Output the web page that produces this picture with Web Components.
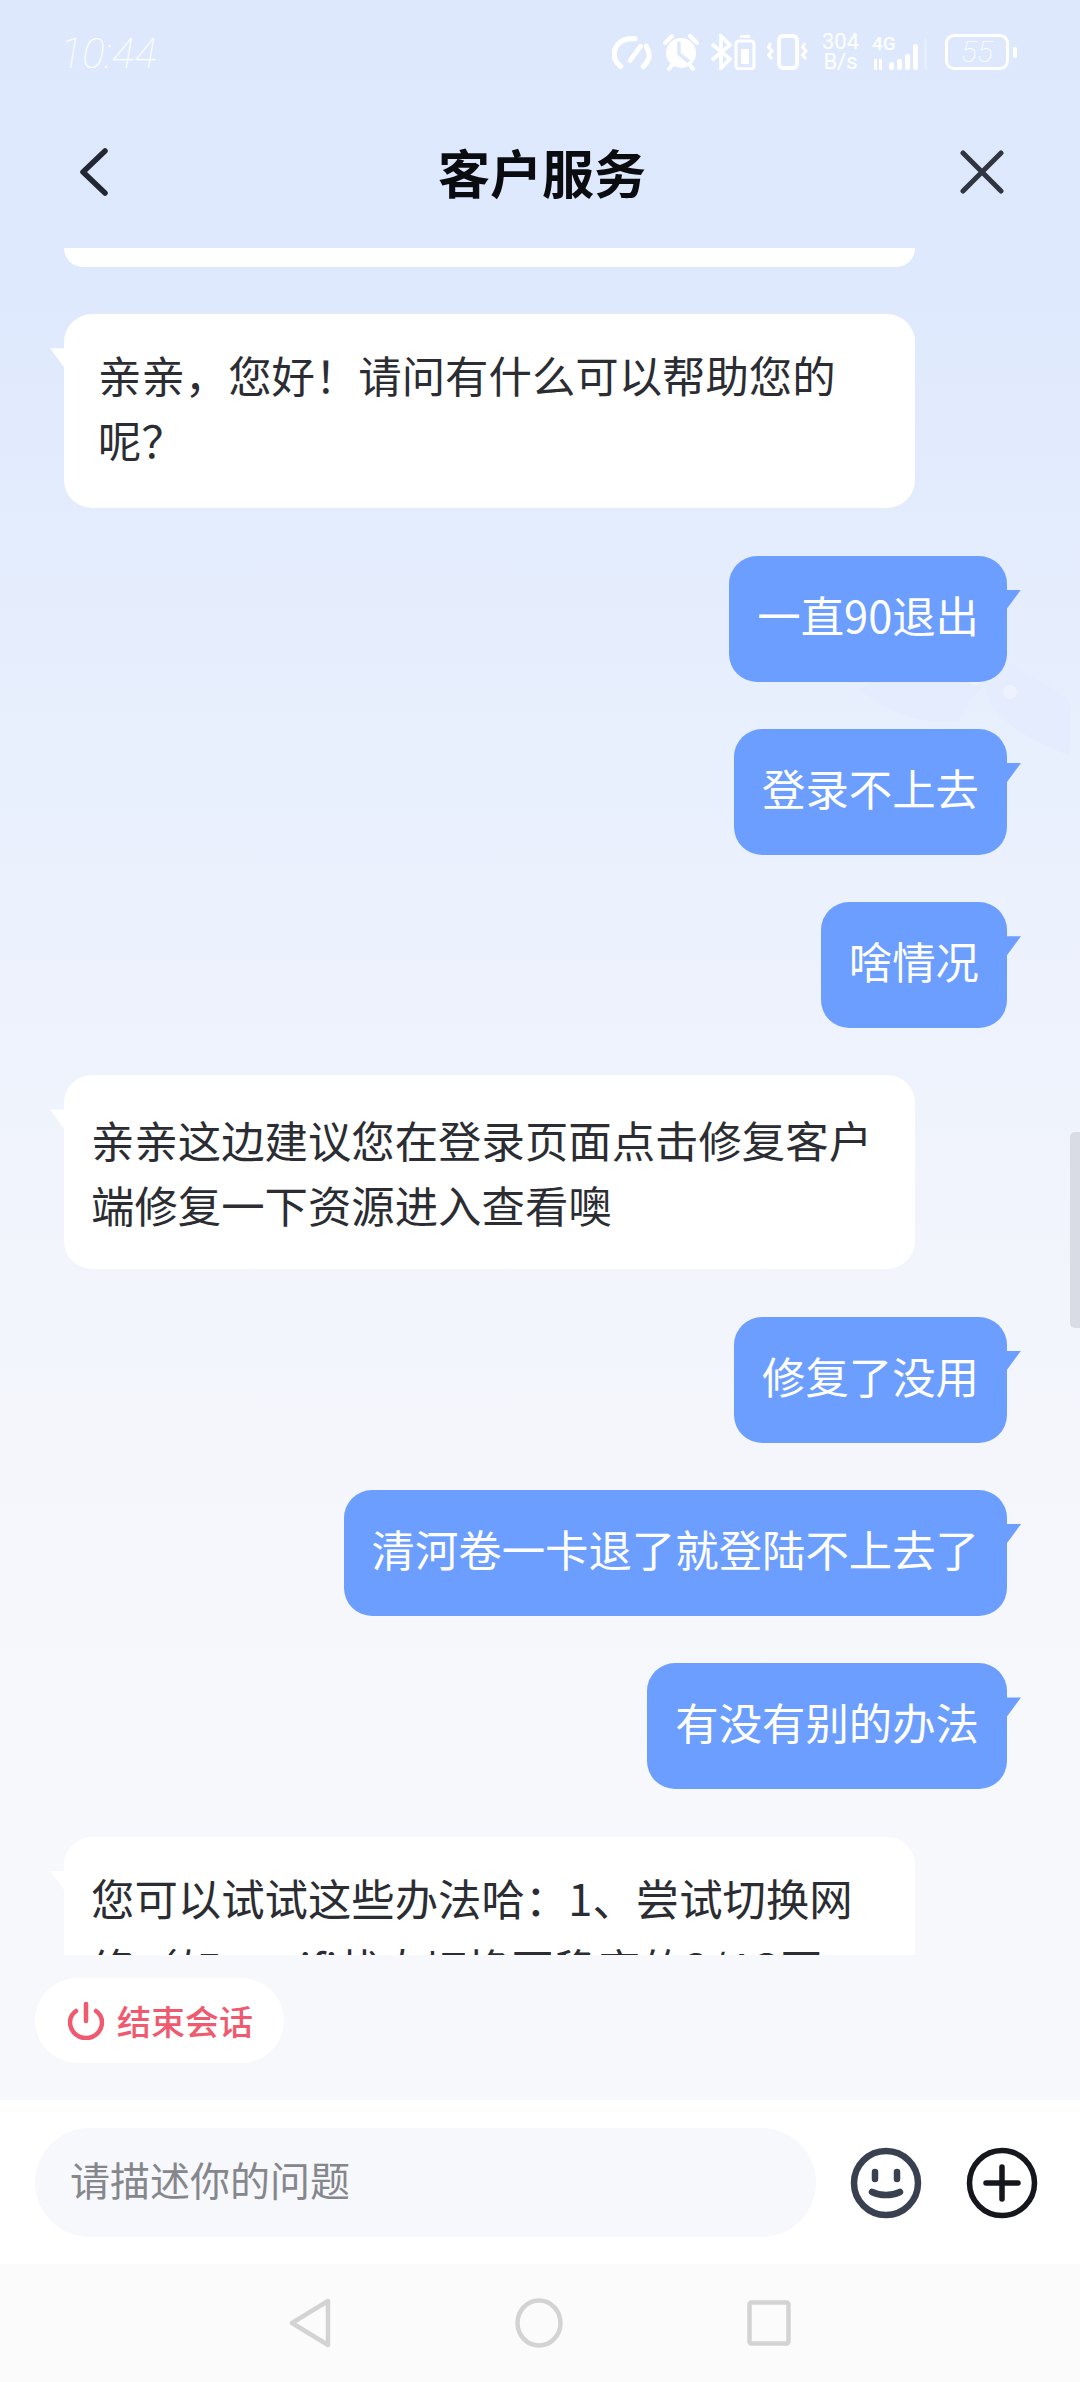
<!DOCTYPE html>
<html lang="zh">
<head>
<meta charset="utf-8">
<title>客户服务</title>
<style>
  html, body { margin: 0; padding: 0; }
  body { font-family: "Noto Sans CJK SC", "Noto Sans", sans-serif; background: #f7f8fb; }
</style>
</head>
<body>
<support-page>
  <status-strip slot="status"></status-strip>
  <title-row slot="title">客户服务</title-row>
  <chat-bubble side="left" stub></chat-bubble>
  <chat-bubble side="left" style="--inset:34px;--top:28px">亲亲，您好！请问有什么可以帮助您的呢？</chat-bubble>
  <chat-bubble side="right">一直90退出</chat-bubble>
  <chat-bubble side="right">登录不上去</chat-bubble>
  <chat-bubble side="right">啥情况</chat-bubble>
  <chat-bubble side="left" style="--top:32px">亲亲这边建议您在登录页面点击修复客户端修复一下资源进入查看噢</chat-bubble>
  <chat-bubble side="right">修复了没用</chat-bubble>
  <chat-bubble side="right">清河卷一卡退了就登陆不上去了</chat-bubble>
  <chat-bubble side="right">有没有别的办法</chat-bubble>
  <chat-bubble side="left" style="--top:25px;line-height:70px">您可以试试这些办法哈：1、尝试切换网络（如：wifi状态切换至稳定的3/4G网</chat-bubble>
  <end-chip slot="chip">结束会话</end-chip>
  <composer-bar slot="composer">请描述你的问题</composer-bar>
  <nav-keys slot="nav"></nav-keys>
</support-page>

<script>
class SupportPage extends HTMLElement {
  constructor() {
    super();
    this.root = this.attachShadow({ mode: "open" });
    this.root.innerHTML = `
      <style>
        :host {
          display: flex;
          flex-direction: column;
          position: relative;
          width: 1080px;
          height: 2382px;
          overflow: hidden;
          background: linear-gradient(180deg, #dde8fd 0, #dfe9fd 300px, #e9f0fd 800px, #f1f4fc 1200px, #f7f8fb 1750px, #f7f8fb 100%);
        }
        .deco { position: absolute; left: 860px; top: 640px; }
        .thumb {
          position: absolute;
          right: 0;
          top: 1132px;
          width: 10px;
          height: 196px;
          border-radius: 5px 0 0 5px;
          background: #d9dce4;
        }
        .list {
          flex: 1;
          min-height: 0;
          overflow: hidden;
          display: flex;
          flex-direction: column;
          gap: 47.3px;
          padding: 0 73px 0 64px;
          position: relative;
        }
      </style>
      <svg class="deco" width="220" height="220" viewBox="0 0 220 220" fill="none">
        <path d="M0 50C30 76 70 86 100 80C106 62 116 52 128 44C122 68 150 92 210 116V60L130 10L40 20Z" fill="#e4ecfd"/>
        <circle cx="115" cy="36" r="9" fill="#edf2fe"/>
        <circle cx="150" cy="52" r="7" fill="#edf2fe"/>
      </svg>
      <slot name="status"></slot>
      <slot name="title"></slot>
      <div class="list"><slot></slot></div>
      <slot name="chip"></slot>
      <slot name="composer"></slot>
      <slot name="nav"></slot>
      <div class="thumb"></div>
    `;
  }
}

class StatusStrip extends HTMLElement {
  constructor() {
    super();
    this.root = this.attachShadow({ mode: "open" });
    this.root.innerHTML = `
      <style>
        :host {
          display: flex;
          align-items: center;
          justify-content: space-between;
          height: 100px;
          padding: 4px 63px 0 60px;
          box-sizing: border-box;
          color: #fff;
          font-family: Roboto, "Noto Sans", sans-serif;
        }
        .time { font-size: 42px; font-weight: 100; font-style: italic; line-height: 1; margin-top: 3px; }
        .icons { display: flex; align-items: center; }
        svg { display: block; flex: none; }
        .speed { line-height: 20px; font-size: 22px; text-align: center; margin: 0 13px; }
        .net { display: flex; flex-direction: column; width: 60px; font-size: 19px; line-height: 20px; font-weight: 500; }
        .net svg { overflow: visible; }
        .batt {
          box-sizing: border-box;
          width: 64px; height: 36px;
          border: 3px solid #fff;
          border-radius: 9px;
          font-size: 30px; font-weight: 100; font-style: italic;
          line-height: 29px;
          text-align: center;
          margin-left: 13px;
        }
        .tip { width: 4px; height: 11px; border-radius: 2px; background: #fff; margin-left: 4px; }
      </style>
      <span class="time">10:44</span>
      <div class="icons">
        <svg width="40" height="36" viewBox="0 0 42 36" fill="none" stroke="#fff" stroke-linecap="round" stroke-linejoin="round">
          <path d="M9 33C3 28 1 22 3 16C5 8 13 3 24 4" stroke-width="5.5"/>
          <path d="M36 12C39 17 40 22 38 26C37 29 35 31 33 33" stroke-width="5.5"/>
          <path d="M19 27L30 12" stroke-width="5"/>
        </svg>
        <svg width="38" height="38" viewBox="0 0 38 38" fill="none" stroke="#fff" stroke-linecap="round" style="margin-left:10px">
          <circle cx="19" cy="20" r="15" fill="#fff" stroke="none"/>
          <path d="M17 10V21L26 28" stroke="#dde8fd" stroke-width="3.5"/>
          <path d="M3 10L10 3M35 10L28 3" stroke-width="4"/>
          <path d="M7 36L11 31M31 36L27 31" stroke-width="4"/>
        </svg>
        <svg width="22" height="36" viewBox="0 0 22 36" fill="none" stroke="#fff" stroke-width="3.6" style="margin-left:10px">
          <path d="M2 10L20 25L11 34V2L20 11L2 26"/>
        </svg>
        <svg width="22" height="36" viewBox="0 0 22 36" fill="none" style="margin-left:2px">
          <rect x="6" y="1" width="10" height="3" fill="#fff"/>
          <rect x="2" y="7" width="18" height="28" rx="3" stroke="#fff" stroke-width="3"/>
          <rect x="7" y="15" width="8" height="15" fill="#fff"/>
        </svg>
        <svg width="42" height="36" viewBox="0 0 42 36" fill="none" stroke="#fff" style="margin-left:11px">
          <rect x="12" y="2" width="18" height="32" rx="4" stroke-width="4"/>
          <path d="M4 9L1.5 13L5 17L1.5 21L5 25" stroke-width="3"/>
          <path d="M38 9L35.5 13L39 17L35.5 21L39 25" stroke-width="3"/>
        </svg>
        <div class="speed">304<br>B/s</div>
        <div class="net">
          <span>4G</span>
          <svg width="60" height="17" viewBox="0 0 60 17" fill="#fff">
            <rect x="2" y="5" width="3" height="11"/><rect x="7" y="5" width="3" height="11"/>
            <rect x="17" y="8" width="5" height="8" rx="2.5"/>
            <rect x="25" y="5" width="5" height="11" rx="2.5"/>
            <rect x="33" y="0" width="5" height="16" rx="2.5"/>
            <rect x="41" y="-10" width="5" height="26" rx="2.5"/>
            <rect x="52" y="-16" width="3" height="32" rx="1.5" opacity=".25"/>
          </svg>
        </div>
        <div class="batt">55</div>
        <div class="tip"></div>
      </div>
    `;
  }
}

class TitleRow extends HTMLElement {
  constructor() {
    super();
    this.root = this.attachShadow({ mode: "open" });
    this.root.innerHTML = `
      <style>
        :host {
          display: grid;
          grid-template-columns: 1fr auto 1fr;
          align-items: center;
          height: 148px;
          padding: 0 76px 4px 80px;
          box-sizing: border-box;
          font-size: 52px;
          font-weight: 700;
          line-height: 1;
          color: #0b0c10;
        }
        svg { display: block; }
        .close { justify-self: end; }
      </style>
      <svg width="28" height="48" viewBox="0 0 28 48" fill="none" stroke="#222731" stroke-width="5.5" stroke-linecap="round" stroke-linejoin="round">
        <path d="M25 3L3 24L25 45" />
      </svg>
      <slot></slot>
      <svg class="close" width="44" height="44" viewBox="0 0 44 44" fill="none" stroke="#30353f" stroke-width="5" stroke-linecap="round">
        <path d="M3 3L41 41M41 3L3 41"/>
      </svg>
    `;
  }
}

class ChatBubble extends HTMLElement {
  constructor() {
    super();
    this.root = this.attachShadow({ mode: "open" });
    this.root.innerHTML = `
      <style>
        :host {
          display: flex;
          flex: none;
          justify-content: flex-start;
          font-size: 43.4px;
          line-height: 65px;
          color: #2b2d33;
        }
        :host([side="right"]) { justify-content: flex-end; color: #fff; }
        .box {
          position: relative;
          box-sizing: border-box;
          background: #fff;
          border-radius: 28px;
          width: 851px;
          height: 194px;
          padding: var(--top, 28px) 42px 0 var(--inset, 27px);
        }
        :host([side="right"]) .box {
          width: auto;
          height: auto;
          max-width: 851px;
          background: #6c9eff;
          padding: 26px 28px 35px;
        }
        :host([stub]) .box { height: 19px; padding: 0; border-radius: 0 0 28px 28px; }
        .box::before {
          content: "";
          position: absolute;
          top: 34px;
          left: -14px;
          width: 14px;
          height: 19px;
          background: inherit;
          clip-path: polygon(0 0, 100% 0, 100% 100%);
        }
        :host([side="right"]) .box::before {
          left: auto;
          right: -14px;
          clip-path: polygon(0 0, 100% 0, 0 100%);
        }
        :host([stub]) .box::before { display: none; }
      </style>
      <div class="box"><slot></slot></div>
    `;
  }
}

class EndChip extends HTMLElement {
  constructor() {
    super();
    this.root = this.attachShadow({ mode: "open" });
    this.root.innerHTML = `
      <style>
        :host {
          display: block;
          flex: none;
          padding: 23px 0 37px 35px;
        }
        .chip {
          display: inline-flex;
          align-items: center;
          gap: 13px;
          height: 85px;
          padding: 0 31px 0 33px;
          box-sizing: border-box;
          background: #fff;
          border-radius: 43px;
          color: #ef5a6f;
          font-size: 34px;
          font-weight: 500;
          line-height: 1;
        }
        svg { display: block; }
      </style>
      <div class="chip">
        <svg width="36" height="38" viewBox="0 0 36 38" fill="none" stroke="#ef5a6f" stroke-width="4.5" stroke-linecap="round">
          <path d="M18 2V19"/>
          <path d="M8 9C4 12 2 16 2 20C2 29 9 36 18 36C27 36 34 29 34 20C34 16 32 12 28 9"/>
        </svg>
        <slot></slot>
      </div>
    `;
  }
}

class ComposerBar extends HTMLElement {
  constructor() {
    super();
    this.root = this.attachShadow({ mode: "open" });
    this.root.innerHTML = `
      <style>
        :host {
          display: flex;
          flex: none;
          align-items: center;
          height: 164px;
          padding: 0 44px 0 35px;
          box-sizing: border-box;
          background: #fff;
        }
        .field {
          display: flex;
          align-items: center;
          flex: none;
          width: 781px;
          height: 109px;
          padding: 0 35px 7px;
          margin-right: 34px;
          box-sizing: border-box;
          border-radius: 55px;
          background: #f7f8fb;
          color: #85878c;
          font-size: 40px;
          line-height: 1;
        }
        svg { display: block; flex: none; margin-top: 2px; }
      </style>
      <div class="field"><slot></slot></div>
      <svg width="72" height="72" viewBox="0 0 72 72" fill="none" stroke="#394150" stroke-linecap="round">
        <circle cx="36" cy="36" r="32" stroke-width="6.5"/>
        <path d="M25 25V32M47 25V32" stroke-width="6.5"/>
        <path d="M22 45C30 49 42 49 50 45" stroke-width="6.5"/>
      </svg>
      <svg width="72" height="72" viewBox="0 0 72 72" fill="none" stroke="#15171c" stroke-linecap="round" style="margin-left:44px">
        <circle cx="36" cy="36" r="32.5" stroke-width="5.5"/>
        <path d="M36 20V52M20 36H52" stroke-width="5.5"/>
      </svg>
    `;
  }
}

class NavKeys extends HTMLElement {
  constructor() {
    super();
    this.root = this.attachShadow({ mode: "open" });
    this.root.innerHTML = `
      <style>
        :host {
          display: flex;
          flex: none;
          justify-content: center;
          align-items: center;
          gap: 184px;
          height: 118px;
          box-sizing: border-box;
          background: #fbfbfc;
        }
        svg { display: block; }
      </style>
      <svg width="42" height="50" viewBox="0 0 42 50" fill="none" stroke="#d3d3d3" stroke-width="4.5" stroke-linejoin="round">
        <path d="M39 3V47L3 25Z"/>
      </svg>
      <svg width="48" height="50" viewBox="0 0 48 50" fill="none" stroke="#d3d3d3" stroke-width="4.5">
        <ellipse cx="24" cy="25" rx="21.5" ry="22.5"/>
      </svg>
      <svg width="44" height="46" viewBox="0 0 44 46" fill="none" stroke="#d3d3d3" stroke-width="4.5" stroke-linejoin="round">
        <rect x="2.5" y="2.5" width="39" height="41" rx="2"/>
      </svg>
    `;
  }
}

customElements.define("support-page", SupportPage);
customElements.define("status-strip", StatusStrip);
customElements.define("title-row", TitleRow);
customElements.define("chat-bubble", ChatBubble);
customElements.define("end-chip", EndChip);
customElements.define("composer-bar", ComposerBar);
customElements.define("nav-keys", NavKeys);
</script>
</body>
</html>
